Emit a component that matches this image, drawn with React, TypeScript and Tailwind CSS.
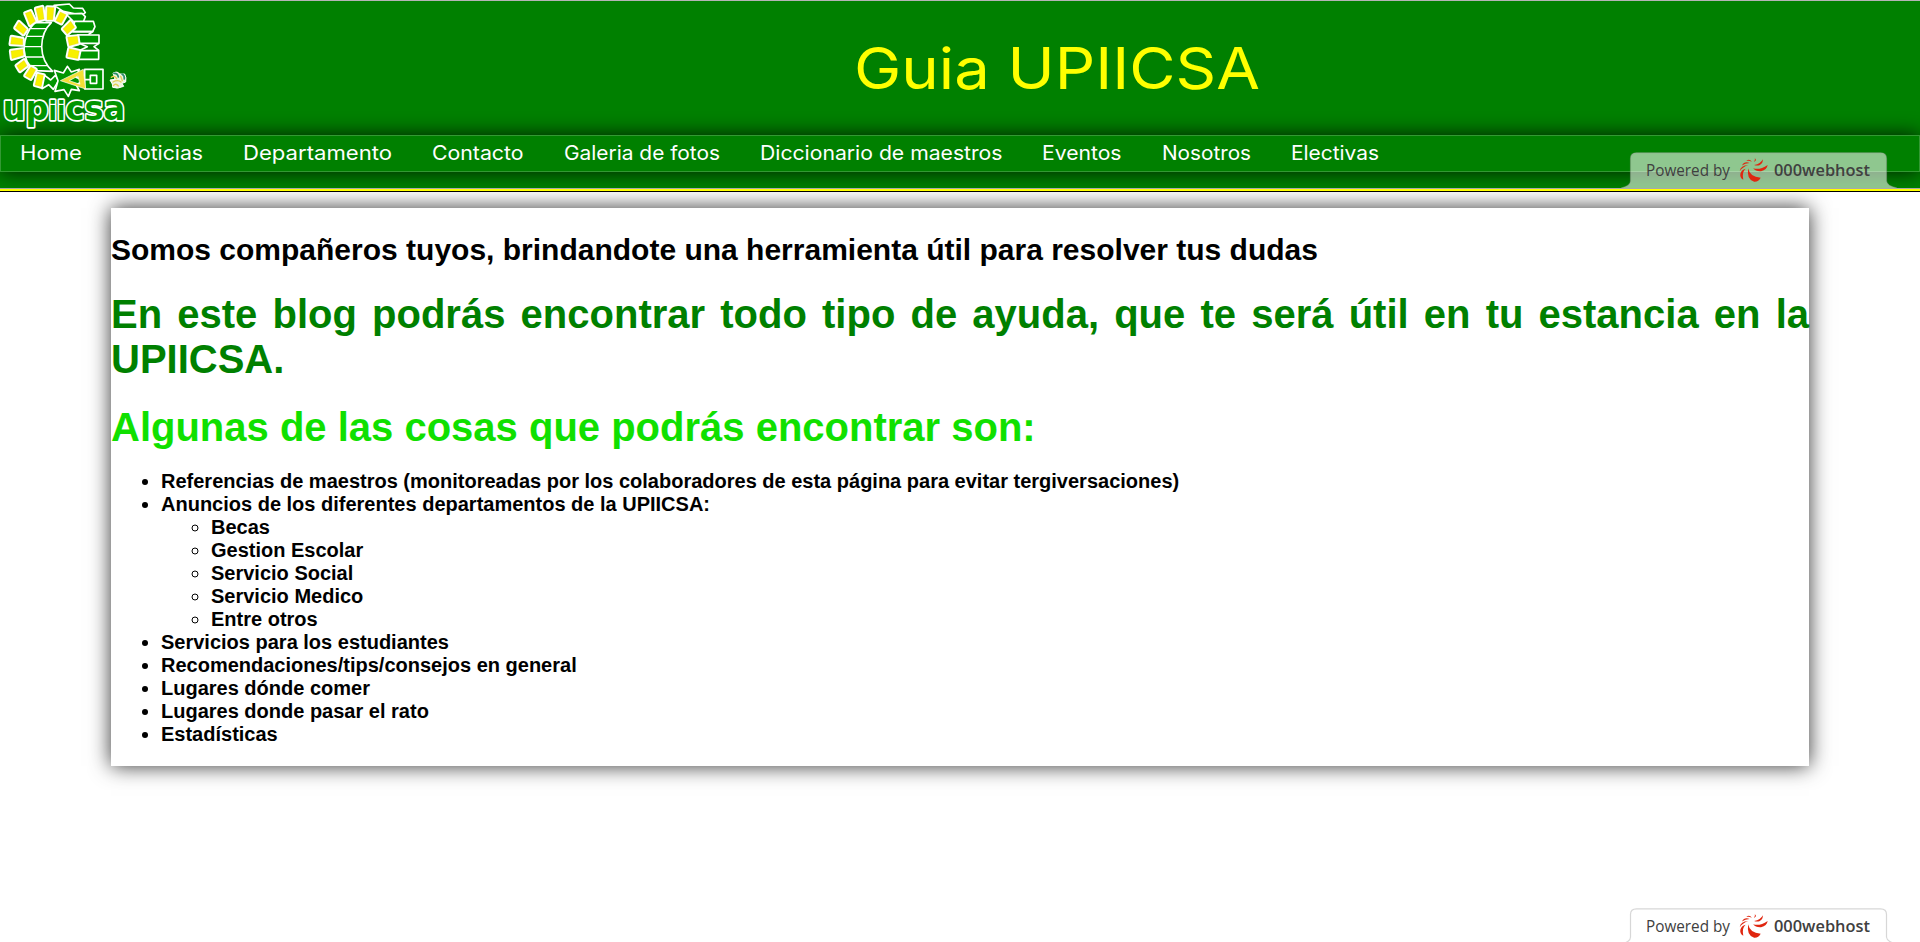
import { useLayoutEffect, useRef, type ReactNode } from "react";

function Fit({ width, children }: { width: number; children: ReactNode }) {
  const ref = useRef<HTMLSpanElement>(null);
  useLayoutEffect(() => {
    const el = ref.current;
    if (el) el.style.transform = `scaleX(${width / el.getBoundingClientRect().width})`;
    return () => {
      if (el) el.style.transform = "";
    };
  }, [width]);
  return (
    <span className="block shrink-0" style={{ width }}>
      <span ref={ref} className="inline-block origin-left whitespace-nowrap">{children}</span>
    </span>
  );
}

const links: [string, number][] = [
  ["Home", 62],
  ["Noticias", 81],
  ["Departamento", 149],
  ["Contacto", 91.5],
  ["Galeria de fotos", 156],
  ["Diccionario de maestros", 242.5],
  ["Eventos", 79.5],
  ["Nosotros", 89],
  ["Electivas", 88],
];

const teeth = [
  "108,26 127,21 132,57 116,61",
  "142,22 162,23 158,59 141,59",
  "181,36 198,44 184,70 168,62",
  "212,64 224,82 202,102 189,87",
  "203,112 232,109 235,130 208,137",
  "208,146 238,153 233,176 203,170",
  "76,40 92,34 106,64 90,75",
  "57,66 80,88 70,103 46,84",
  "35,111 68,117 68,134 32,132",
  "33,153 68,148 70,166 36,176",
  "50,197 72,181 81,197 60,213",
  "93,201 107,209 92,236 76,227",
  "113,222 131,226 124,260 105,255",
];

function Logo() {
  return (
    <svg className="block h-[135px] w-[140px]" viewBox="0 0 420 405" strokeLinejoin="round">
      <g fill="#009600" stroke="#fff" strokeWidth="5">
        <path d="M162 16 L208 12 L220 24 L248 25 L256 38 L245 46 L190 34Z" />
        <path d="M198 42 L246 40 L256 50 L250 66 L222 66Z" />
        <path d="M224 64 H280 L285 80 L278 95 H218Z" />
        <path d="M218 95 H278 L264 105 H232" fill="none" />
        <path d="M234 105 H297 V130 H236Z M237 152 H296 V178 H234Z" />
        <path d="M297 130 L282 140 L297 152 M237 130 L262 140 L237 152" fill="none" />
        <path d="M154 68 L104 68 Q74 100 72 146 Q74 190 106 212 L158 214 Q126 184 125 140 Q126 94 154 68Z" />
        <path d="M92 86 H141 M80 109 H130 M73 140 H125 M75 171 H129 M88 197 H142" fill="none" strokeWidth="4" />
      </g>
      <g fill="#f8f000" stroke="#fff" strokeWidth="13">
        {teeth.map((p) => <polygon key={p} points={p} />)}
      </g>
      <g fill="#f8f000" stroke="#d8cc20" strokeWidth="1">
        {teeth.map((p) => <polygon key={p} points={p} />)}
      </g>
      <g fill="#009600" stroke="#fff" strokeWidth="5">
        <path d="M134 226 L152 240 L166 226 L176 242 L160 268 L146 254 L126 266Z" />
        <path d="M174 242 L163 211 L190 219 L202 199 L214 216 L238 208 L228 232 L252 242 L228 254 L238 272 L214 268 L205 289 L192 269 L165 274Z" />
        <path d="M254 208 H309 V267 H254Z" />
        <path d="M271 226 H290 V250 H271Z M246 239 H271" />
      </g>
      <path d="M181 242 L250 208 L257 267Z M208 242 L240 253 L234 228Z" fill="#f3df35" fillRule="evenodd" stroke="#fff" strokeWidth="2" />
      <g fill="none" strokeLinecap="round">
        <path d="M340 219 Q352 212 359 222 L374 222 Q380 232 377 246 L366 250 L371 259 Q352 268 338 262 L337 252 L330 240 L344 238Z" fill="#eef3df" stroke="#fff" strokeWidth="3" />
        <path d="M342 220 Q353 219 355 231 M366 222 Q374 226 373 237" stroke="#2a8d68" strokeWidth="5" />
        <path d="M334 232 Q343 225 350 236 M339 246 Q354 238 363 246 M340 257 Q347 248 355 258 M362 229 L367 242" stroke="#e2cf55" strokeWidth="4" />
      </g>
      <text
        x="8" y="361" textLength="368" lengthAdjust="spacingAndGlyphs"
        className="font-['DejaVu_Sans',sans-serif] text-[102px] font-bold [paint-order:stroke]"
        fill="#009600" stroke="#fff" strokeWidth="10"
      >
        up<tspan className="text-[78px]">ii</tspan>csa
      </text>
    </svg>
  );
}

function HostBadge({ tint }: { tint: string }) {
  return (
    <div className="relative h-[37px] w-[276px] font-['Open_Sans',sans-serif] text-[#404040]">
      <svg className="absolute inset-0 h-[37px] w-[276px]" viewBox="0 0 276 37">
        <path
          d="M0 36 Q9.5 34 9.5 29 V6.5 Q9.5 .8 15.5 .8 H259.5 Q265.5 .8 265.5 6.5 V29 Q266 34 276 36"
          fill={tint} stroke="#9a9a9a" strokeOpacity=".4" strokeWidth="1.2"
        />
      </svg>
      <div className="relative flex h-[36px] items-center pl-[25px] leading-[36px]">
        <div className="text-[15.5px]"><Fit width={84}>Powered by</Fit></div>
        <svg className="ml-[9px] h-[24px] w-[29px] shrink-0" viewBox="418 101 88 73" fill="#e0260f">
          <path d="M446 132 Q450 158 484 161 Q477 174 464 173 Q440 166 446 132Z" />
          <path d="M461 132 Q480 139 505 122 Q503 137 485 141 Q468 142 461 132Z" />
          <path d="M464 122 Q484 120 490 105 Q492 117 480 123 Q471 125 464 122Z" />
          <path d="M438 134 Q426 144 431 167 Q420 162 422 149 Q425 137 438 134Z" />
          <path d="M446 123 Q430 127 420 141 Q423 123 446 123Z" />
          <path d="M450 116 Q436 116 427 124 Q434 110 450 116Z" />
          <path d="M457 113 Q450 108 440 110 Q450 102 457 113Z" />
          <path d="M463 113 Q468 110 466 102 Q474 108 463 113Z" />
        </svg>
        <div className="ml-[6px] text-[16.5px] font-semibold"><Fit width={96}>000webhost</Fit></div>
      </div>
    </div>
  );
}

export default function App() {
  return (
    <div className="relative h-[942px] w-full overflow-hidden bg-white font-['Liberation_Sans',Arial,sans-serif] text-black">
      <header className="relative z-10 h-[192px] overflow-hidden border-b border-black bg-[#008000]">
        <div className="flex h-[135px] border-t border-[#b4b4b4] font-['Inter',sans-serif] text-[57.5px] leading-[135px] font-normal text-[#ff0]">
          <div className="-mt-px w-[854px]"><Logo /></div>
          <Fit width={406}>Guia UPIICSA</Fit>
        </div>
        <nav className="flex h-[37px] items-center gap-[40px] border border-white/20 bg-[#008000] pl-[19px] font-['Inter',sans-serif] text-[19.8px] leading-[35px] text-white shadow-[0_0_20px_rgba(0,0,0,0.8)]">
          {links.map(([label, width]) => <Fit key={label} width={width}>{label}</Fit>)}
        </nav>
        <div className="mt-[16px] h-[3px] border-t border-[#a9a9a9] bg-[#ff0]" />
        <div className="absolute top-[152px] left-[1621px] h-[36px] overflow-hidden">
          <HostBadge tint="rgba(255,255,255,0.56)" />
        </div>
      </header>

      <main className="mx-auto mt-[16px] h-[558px] w-[1698px] bg-white pt-[25px] shadow-[0_0_20px_rgba(0,0,0,0.8)]">
        <h2 className="text-[30px] leading-[34px] font-bold">
          Somos compañeros tuyos, brindandote una herramienta útil para resolver tus dudas
        </h2>
        <h1 className="mt-[25px] text-justify text-[40px] leading-[45px] font-bold text-[#008000]">
          En este blog podrás encontrar todo tipo de ayuda, que te será útil en tu estancia en la UPIICSA.
        </h1>
        <h1 className="mt-[23px] text-[40px] leading-[45px] font-bold text-[#10e000]">
          Algunas de las cosas que podrás encontrar son:
        </h1>
        <ul className="mt-[20px] list-disc pl-[50px] text-[20px] leading-[23px] font-bold">
          <li>Referencias de maestros (monitoreadas por los colaboradores de esta página para evitar tergiversaciones)</li>
          <li>
            Anuncios de los diferentes departamentos de la UPIICSA:
            <ul className="list-[circle] pl-[50px]">
              <li>Becas</li>
              <li>Gestion Escolar</li>
              <li>Servicio Social</li>
              <li>Servicio Medico</li>
              <li>Entre otros</li>
            </ul>
          </li>
          <li>Servicios para los estudiantes</li>
          <li>Recomendaciones/tips/consejos en general</li>
          <li>Lugares dónde comer</li>
          <li>Lugares donde pasar el rato</li>
          <li>Estadísticas</li>
        </ul>
      </main>

      <div className="absolute top-[908px] left-[1621px]">
        <HostBadge tint="#fff" />
      </div>
    </div>
  );
}
